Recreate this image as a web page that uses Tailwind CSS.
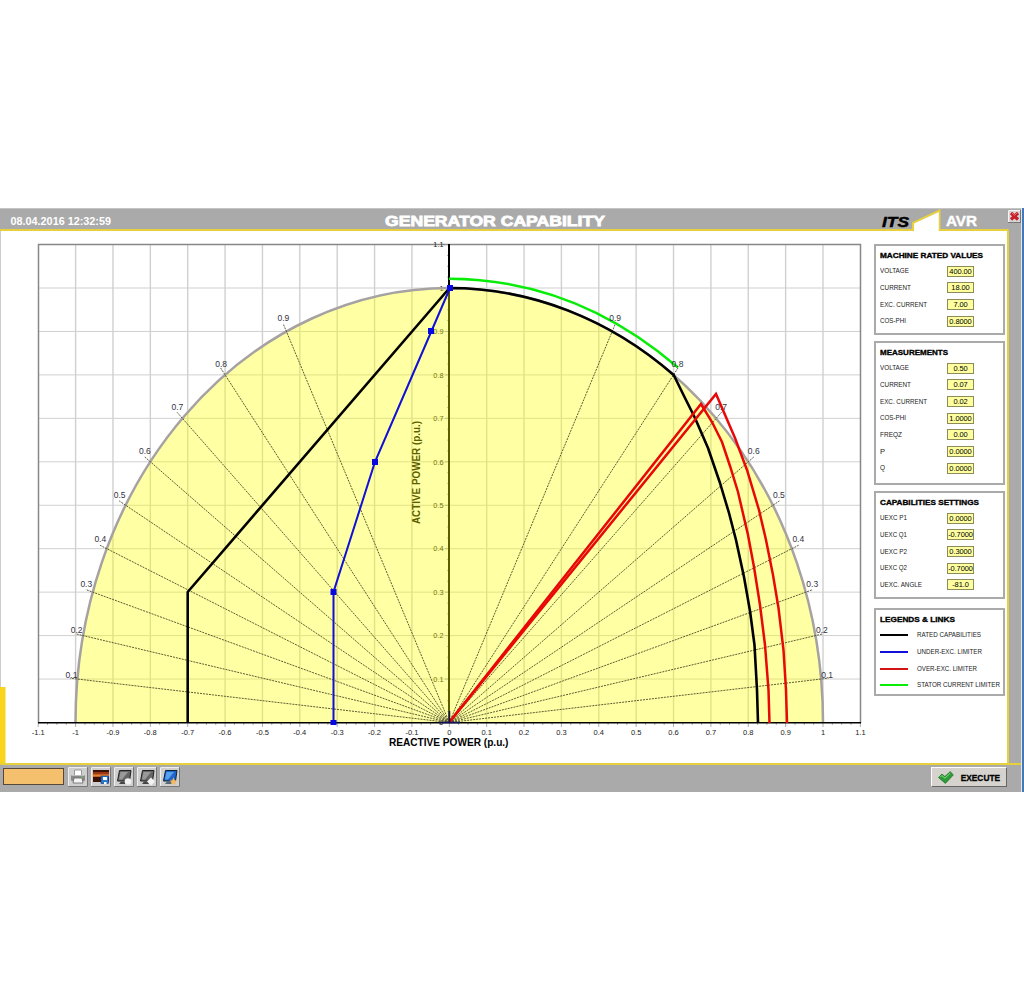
<!DOCTYPE html>
<html lang="en">
<head>
    <meta charset="UTF-8">
    <title>Generator Capability</title>
    <script src="https://cdn.jsdelivr.net/npm/@tailwindcss/browser@4"></script>
</head>
<body class="bg-white w-[1024px] h-[1000px] pt-[208px] overflow-hidden font-['Liberation_Sans',Arial,sans-serif]">
    <div class="flex w-[1024px] h-[584px]">
        <div class="w-[1021px] flex flex-col bg-[#aaaaaa] border-t border-[#c4c4c4]">

            <!-- Header -->
            <header class="flex h-[22px] shrink-0">
                <svg width="1021" height="22" viewBox="0 209 1021 22">
                    <path d="M0 230H913V223L939.5 210.5V230H1008.500" fill="none" stroke="#e6d03c" stroke-width="2"/>
                    <path d="M914 231V223.500L938.800 212V231Z" fill="#fff"/>
                    <g fill="#fff" font-weight="bold">
                        <text x="10.500" y="224.500" font-size="10.500" textLength="100.500" lengthAdjust="spacingAndGlyphs">08.04.2016 12:32:59</text>
                        <text x="385" y="226" font-size="15" textLength="220" lengthAdjust="spacingAndGlyphs" stroke="#fff" stroke-width=".8">GENERATOR CAPABILITY</text>
                        <text x="946" y="226" font-size="15" textLength="31" lengthAdjust="spacingAndGlyphs" stroke="#fff" stroke-width=".4">AVR</text>
                    </g>
                    <text x="882" y="227" font-size="15.500" font-weight="bold" font-style="italic" textLength="27" lengthAdjust="spacingAndGlyphs" stroke="#000" stroke-width=".5">ITS</text>
                    <rect x="1008.500" y="210.500" width="12" height="12" fill="#d8d4d4" stroke="#777"/>
                    <path d="M1008.500 222V210.500H1020" fill="none" stroke="#f4f4f4"/>
                    <path d="M1011 213L1018 219.500M1018 213L1011 219.500" stroke="#c81e28" stroke-width="3.200"/>
                    <path d="M1012 213L1014.500 215.500L1017 213" fill="none" stroke="#f08080" stroke-width=".8"/>
                </svg>
            </header>

            <!-- Chart and side panels -->
            <main class="flex h-[532px] shrink-0 w-[1009px] bg-white border-r-2 border-[#e6d03c] border-l border-l-[#cccccc]">
                <svg id="chart" class="shrink-0 -ml-px" width="874" height="532" viewBox="0 231 874 532">
                    <rect x="0" y="687" width="5.500" height="76" fill="#f8d41c"/>
                    <g id="grid" stroke="#d0d0d0"></g>
                    <path d="M38.500 723V244.500H860.500V723" fill="none" stroke="#888" stroke-width="1.500"/>
                    <g id="ticks" stroke="#999" stroke-width=".8"></g>
                    <path d="M449 244V723" stroke="#000" stroke-width="2"/>
                    <g id="ylabels" fill="#222" font-size="7.300" text-anchor="end"></g>
                    <text transform="translate(420 524) rotate(-90)" font-size="10" font-weight="bold" textLength="103" lengthAdjust="spacingAndGlyphs">ACTIVE POWER (p.u.)</text>
                    <path d="M75.500 722.500A374 434.500 0 0 1 449.500 288A374 434.500 0 0 1 823 722.500Z" fill="#ffff00" fill-opacity=".36"/>
                    <path d="M75.500 722.500A374 434.500 0 0 1 449.500 288A374 434.500 0 0 1 823 722.500" fill="none" stroke="#a6a2a2" stroke-width="2.500"/>
                    <path d="M38 722.800H861" stroke="#000" stroke-width="1.500"/>
                    <g id="xlabels" fill="#222" font-size="7.500" text-anchor="middle"></g>
                    <g id="rays" stroke="#4a4a28" stroke-width=".9" stroke-dasharray="2 1"></g>
                    <path d="M187.700 723V592L449.500 288A374 434.500 0 0 1 673.700 375L684 396L695 418L708 448L720 483L729 513L736 540L744 577L750 611L754.500 645L757 690L758 723" fill="none" stroke="#000" stroke-width="2.600" stroke-linejoin="round"/>
                    <g fill="none" stroke="#e80808" stroke-width="2.500">
                        <path d="M449.500 722L701 404L712 422L722 442L730 466L738 492L748 535L754 567L760 605L765 645L768.500 690L769.500 723"/>
                        <path d="M449.500 722L716 394L735 438L747 470L759 510L766 540L773 575L778.500 608L783.500 650L786 690L787 723"/>
                    </g>
                    <path d="M449.500 711V723M439 722.500H460" stroke="#10105a" stroke-width="1.500"/>
                    <path d="M449 278.800C535 279 611 310 678 367.500" fill="none" stroke="#08ec08" stroke-width="2.500"/>
                    <path d="M333.500 722V592L375 461.800L431.500 331L450 288" fill="none" stroke="#1010d8" stroke-width="2"/>
                    <g fill="#0808e0">
                        <rect x="447" y="285" width="6" height="6"/>
                        <rect x="428" y="328" width="6" height="6"/>
                        <rect x="372" y="459" width="6" height="6"/>
                        <rect x="330.500" y="589" width="6" height="6"/>
                        <rect x="330.500" y="720" width="6" height="5"/>
                    </g>
                    <g id="raylabels" fill="#33333f" font-size="8.500" text-anchor="middle"></g>
                    <text x="389" y="745.500" font-size="10" font-weight="bold" textLength="119.500" lengthAdjust="spacingAndGlyphs">REACTIVE POWER (p.u.)</text>
                </svg>
                <aside id="panels" class="w-[131px] pt-[13px] flex flex-col shrink-0"></aside>
            </main>

            <!-- Toolbar -->
            <footer class="flex items-start flex-1 border-t-2 border-[#e6d03c] pl-[3px] pr-[14px] pt-[3px]">
                <div class="w-[61px] h-[17px] bg-[#f5c06e] border border-[#554838] mr-[4px]"></div>
                <div class="flex gap-[3px] -mt-px">
                    <svg width="20" height="20" viewBox="0 0 20 20">
                        <path d="M.5.5H19.500V19.500H.5Z" fill="#cfcfcf" stroke="#777"/><path d="M.5 19V.5H19" fill="none" stroke="#eee"/>
                        <path d="M6.500 8V3H13.500V8" fill="#fff" stroke="#999"/><rect x="3" y="8" width="14" height="6" rx="1" fill="#888"/>
                        <path d="M3.500 8.500H16.500" stroke="#bbb"/><path d="M6 11H14L15 16H5Z" fill="#f4f4f4" stroke="#666" stroke-width=".8"/><path d="M13 10H15" stroke="#6c6"/>
                    </svg>
                    <svg width="20" height="20" viewBox="0 0 20 20">
                        <path d="M.5.5H19.500V19.500H.5Z" fill="#cfcfcf" stroke="#777"/><path d="M.5 19V.5H19" fill="none" stroke="#eee"/>
                        <rect x="2" y="3" width="16" height="12" fill="#3a1208"/><path d="M2 8.500H18" stroke="#f08030" stroke-width="2.500"/><path d="M2 6H18" stroke="#9c3818" stroke-width="2"/>
                        <rect x="10" y="9" width="7.500" height="7.500" fill="#2878d0" stroke="#103878" stroke-width=".6"/><path d="M12 10H16V13H12ZM13 15H15.500V17H13Z" fill="#fff"/>
                    </svg>
                    <svg width="20" height="20" viewBox="0 0 20 20">
                        <path d="M.5.5H19.500V19.500H.5Z" fill="#cfcfcf" stroke="#777"/><path d="M.5 19V.5H19" fill="none" stroke="#eee"/>
                        <path d="M5.500 3.500H17L15.500 14H3.500Z" fill="#666" stroke="#222"/><path d="M6.500 5H14L8 12.500H5Z" fill="#999"/><path d="M5 17H12L11 14.500H7Z" fill="#444"/>
                        <circle cx="14" cy="14.500" r="3.300" fill="#f2f2f2"/>
                    </svg>
                    <svg width="20" height="20" viewBox="0 0 20 20">
                        <path d="M.5.5H19.500V19.500H.5Z" fill="#cfcfcf" stroke="#777"/><path d="M.5 19V.5H19" fill="none" stroke="#eee"/>
                        <path d="M5.500 3.500H17L15.500 14H3.500Z" fill="#666" stroke="#222"/><path d="M6.500 5H14L8 12.500H5Z" fill="#999"/><path d="M5 17H12L11 14.500H7Z" fill="#444"/>
                        <path d="M14 10.500L18 14.500L14 18.500L10 14.500Z" fill="#f2f2f2"/>
                    </svg>
                    <svg width="20" height="20" viewBox="0 0 20 20">
                        <path d="M.5.5H19.500V19.500H.5Z" fill="#cfcfcf" stroke="#777"/><path d="M.5 19V.5H19" fill="none" stroke="#eee"/>
                        <path d="M5.500 3.500H17L15.500 14H3.500Z" fill="#1c66cc" stroke="#123"/><path d="M6.500 5H14L8 12.500H5Z" fill="#58a0f0"/><path d="M5 17H12L11 14.500H7Z" fill="#567"/>
                        <path d="M13.500 10.500L14.700 13.200L17.500 13.500L15.400 15.300L16 18L13.500 16.500L11 18L11.600 15.300L9.500 13.500L12.300 13.200Z" fill="#f4b860"/>
                    </svg>
                </div>
                <button class="ml-auto -mt-px w-[76px] h-[20px] flex items-center bg-[#d6d2ce] border border-t-white border-l-white border-r-[#666] border-b-[#666] pl-[6px]">
                    <svg width="69" height="17" viewBox="0 0 69 17">
                        <path d="M.5 8.500L4 5L7 7.500L12.500 2.500L15.500 6L7.500 14.500Z" fill="#2f9a38" stroke="#176a22" stroke-width=".7"/>
                        <path d="M2.500 8L4 6.500L7 9.200L12.500 4" fill="none" stroke="#88dc80"/>
                        <text x="23" y="12.500" font-size="9" font-weight="bold" textLength="40" lengthAdjust="spacingAndGlyphs" stroke="#000" stroke-width=".3">EXECUTE</text>
                    </svg>
                </button>
            </footer>
        </div>
        <div class="w-[3px] bg-[#4578b4] border-l border-[#e4e8ee]"></div>
    </div>

    <script>
        const X = v => 449.3 + v * 373.7;
        const Y = v => 722.5 - v * 434.5;
        const put = (id, html) => document.getElementById(id).innerHTML = html;
        const num = v => String(Math.round(v * 10) / 10);

        let grid = "", ticks = "", xl = "", yl = "", rays = "", rl = "";
        for (let i = -10; i <= 10; i++) {
            grid += `<path d="M${X(i / 10)} 245V722" stroke-width="1.4"/>`;
        }
        for (let i = 1; i <= 10; i++) {
            grid += `<path d="M39 ${Y(i / 10)}H860" stroke-width="1"/>`;
        }
        for (let i = -44; i <= 44; i++) {
            ticks += `<path d="M${X(i / 40)} 723v${i % 4 ? 2 : 4}"/>`;
            if (i >= 0) ticks += `<path d="M449 ${Y(i / 40)}h${i % 4 ? -2 : -4}"/>`;
        }
        for (let i = -11; i <= 11; i++) {
            xl += `<text x="${X(i / 10)}" y="734.5">${num(i / 10)}</text>`;
            if (i >= 0) yl += `<text x="443.500" y="${Y(i / 10) + 2.7}">${num(i / 10)}</text>`;
        }

        // cos-phi rays, label offsets from the rim: [dx, baseline y]
        const labels = [[6, 677.5], [6.5, 633], [6.5, 586.5], [6.5, 542], [6, 498], [5.5, 453.5], [5, 409.5], [4, 366.5], [3, 320.5]];
        labels.forEach(([dx, y], i) => {
            const p = (i + 1) / 10, q = Math.sqrt(1 - p * p);
            [-1, 1].forEach(s => {
                rays += `<path d="M${X(0)} ${Y(0)}L${X(s * q * 1.02)} ${Y(p * 1.02)}"/>`;
                rl += `<text x="${X(s * q) + s * dx}" y="${y}">${p}</text>`;
            });
        });
        put("grid", grid); put("ticks", ticks); put("xlabels", xl); put("ylabels", yl); put("rays", rays); put("raylabels", rl);

        // [title, title width, panel height, margin, rows: [label, label width, value]]
        const panels = [
            ["MACHINE RATED VALUES", 103, 91, 6, [["VOLTAGE", 29, "400.00"], ["CURRENT", 31, "18.00"], ["EXC. CURRENT", 47, "7.00"], ["COS-PHI", 26, "0.8000"]]],
            ["MEASUREMENTS", 68, 144, 6, [["VOLTAGE", 29, "0.50"], ["CURRENT", 31, "0.07"], ["EXC. CURRENT", 47, "0.02"], ["COS-PHI", 26, "1.0000"], ["FREQZ", 22, "0.00"], ["P", 5, "0.0000"], ["Q", 5, "0.0000"]]],
            ["CAPABILITIES SETTINGS", 99, 108, 9, [["UEXC P1", 27, "0.0000"], ["UEXC Q1", 27, "-0.7000"], ["UEXC P2", 27, "0.3000"], ["UEXC Q2", 27, "-0.7000"], ["UEXC. ANGLE", 42, "-81.0"]]],
            ["LEGENDS &amp; LINKS", 75, 88, 0, [["RATED CAPABILITIES", 64, null, "#000"], ["UNDER-EXC. LIMITER", 65, null, "#1010d8"], ["OVER-EXC. LIMITER", 60, null, "#d41414"], ["STATOR CURRENT LIMITER", 83, null, "#08ec08"]]]
        ];
        const label = (t, w) => `<svg class="shrink-0 overflow-visible" width="${w}" height="10"><text x="0" y="7.300" font-size="7.200" fill="#222" textLength="${w}" lengthAdjust="spacingAndGlyphs">${t}</text></svg>`;
        put("panels", panels.map(([title, w, h, mb, rows]) => `
            <section class="w-[131px] border-2 border-[#aaaaaa] pl-[4px] shrink-0" style="height:${h}px;margin-bottom:${mb}px">
                <div class="h-[17px] flex items-center"><svg class="overflow-visible" width="${w}" height="12"><text x="0" y="9" font-size="7.800" font-weight="bold" stroke="#000" stroke-width=".35" textLength="${w}" lengthAdjust="spacingAndGlyphs">${title}</text></svg></div>
                ${rows.map(([t, lw, v, c]) => v === null
                    ? `<div class="h-[16.65px] flex items-center gap-[9px]"><div class="w-[28px] h-[2px] shrink-0" style="background:${c}"></div>${label(t, lw)}</div>`
                    : `<div class="h-[16.65px] flex items-center justify-between pr-[29px]">${label(t, lw)}<div class="w-[27px] h-[11px] bg-[#ffffa0] border border-[#8c8c58] text-[7.5px] leading-[9px] flex justify-center whitespace-nowrap tracking-[-0.1px]">${v}</div></div>`).join("")}
            </section>`).join(""));
    </script>
</body>
</html>
